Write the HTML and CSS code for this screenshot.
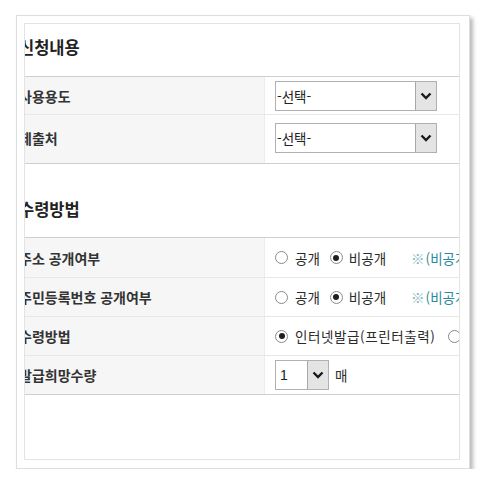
FILE: index.html
```html
<!DOCTYPE html>
<html lang="ko">
<head>
<meta charset="utf-8">
<title>신청내용</title>
<link rel="stylesheet" href="styles.css">
</head>
<body>
<div class="frame">
  <div class="viewport">
    <div class="content">
      <div class="section-title title-1">신청내용</div>
      <div class="table">
        <div class="row row-a">
          <div class="label">사용용도</div>
          <div class="value">
            <div class="select select-wide"><span class="sel-text">-선택-</span><span class="sel-btn"><svg width="12" height="8" viewBox="0 0 12 8"><path d="M1.5 1.5 L6 6 L10.5 1.5" fill="none" stroke="#1a1a1a" stroke-width="2.4"/></svg></span></div>
          </div>
        </div>
        <div class="row row-b last">
          <div class="label">제출처</div>
          <div class="value">
            <div class="select select-wide"><span class="sel-text">-선택-</span><span class="sel-btn"><svg width="12" height="8" viewBox="0 0 12 8"><path d="M1.5 1.5 L6 6 L10.5 1.5" fill="none" stroke="#1a1a1a" stroke-width="2.4"/></svg></span></div>
          </div>
        </div>
      </div>
      <div class="section-title title-2">수령방법</div>
      <div class="table">
        <div class="row row-c">
          <div class="label">주소 공개여부</div>
          <div class="value">
            <span class="radio"></span><span class="opt opt-first">공개</span>
            <span class="radio checked"></span><span class="opt">비공개</span>
            <span class="note"><span class="mark">※</span>(비공개 시 주소 일부가 표시되지 않습니다)</span>
          </div>
        </div>
        <div class="row row-d">
          <div class="label">주민등록번호 공개여부</div>
          <div class="value">
            <span class="radio"></span><span class="opt opt-first">공개</span>
            <span class="radio checked"></span><span class="opt">비공개</span>
            <span class="note"><span class="mark">※</span>(비공개 시 뒷자리가 표시되지 않습니다)</span>
          </div>
        </div>
        <div class="row row-d">
          <div class="label">수령방법</div>
          <div class="value">
            <span class="radio checked"></span><span class="opt opt-first opt-spaced">인터넷발급(프린터출력)</span>
            <span class="radio"></span><span class="opt">우편발송</span>
          </div>
        </div>
        <div class="row row-d last">
          <div class="label">발급희망수량</div>
          <div class="value">
            <div class="select select-qty"><span class="sel-text qty-text">1</span><span class="sel-btn"><svg width="12" height="8" viewBox="0 0 12 8"><path d="M1.5 1.5 L6 6 L10.5 1.5" fill="none" stroke="#1a1a1a" stroke-width="2.4"/></svg></span></div>
            <span class="unit">매</span>
          </div>
        </div>
      </div>
    </div>
  </div>
</div>
</body>
</html>
```
FILE: styles.css
```css
html, body {
  margin: 0;
  padding: 0;
  background: #ffffff;
}
body {
  font-family: "Noto Sans CJK KR", "Noto Sans", sans-serif;
  color: #333333;
}
.frame {
  margin: 15px 0 0 16px;
  width: 445px;
  height: 445px;
  border: 1px solid #dedede;
  background: #ffffff;
  box-shadow: 3px 3px 4px rgba(0, 0, 0, 0.28);
  padding: 7px 0 0 7px;
}
.viewport {
  width: 434px;
  height: 435px;
  border: 1px solid #e3e3e3;
  overflow: hidden;
  background: #ffffff;
}
.content {
  width: 700px;
  margin-left: -16px;
}
.section-title {
  font-size: 16.5px;
  font-weight: 700;
  line-height: 22px;
  color: #222222;
  padding-left: 10px;
  border-bottom: 1px solid #cfcfcf;
  box-sizing: border-box;
}
.title-1 {
  height: 53px;
  padding-top: 12px;
}
.title-2 {
  height: 74px;
  padding-top: 34px;
}
.table {
  border-bottom: 1px solid #cfcfcf;
}
.row {
  display: flex;
  border-bottom: 1px solid #e8e8e8;
}
.row.last {
  border-bottom: none;
}
.row-a { height: 37px; }
.row-b { height: 48px; }
.row-c { height: 39px; }
.row-d { height: 38px; }
.label {
  width: 256px;
  box-sizing: border-box;
  padding-left: 10px;
  background: #f6f6f6;
  border-right: 1px solid #ececec;
  font-size: 14px;
  font-weight: 700;
  color: #333333;
  display: flex;
  align-items: center;
  white-space: nowrap;
}
.row-b .label, .row-b .value {
  padding-bottom: 2px;
}
.value {
  flex: 1;
  display: flex;
  align-items: center;
  padding-left: 10px;
  font-size: 13.5px;
  white-space: nowrap;
  color: #2a2a2a;
}
.select {
  display: flex;
  height: 30px;
  box-sizing: border-box;
  border: 1px solid #b0b0b0;
  background: #ffffff;
}
.select-wide { width: 162px; }
.select-qty { width: 54px; }
.sel-text {
  flex: 1;
  padding-left: 1px;
  font-size: 13.5px;
  line-height: 28px;
  color: #222222;
}
.qty-text {
  padding-left: 4px;
  font-family: "Liberation Sans", Arial, sans-serif;
  font-size: 14px;
}
.sel-btn {
  width: 20px;
  border-left: 1px solid #a8a8a8;
  background: #e4e4e4;
  display: flex;
  align-items: center;
  justify-content: center;
}
.radio {
  width: 13px;
  height: 13px;
  box-sizing: border-box;
  border: 1px solid #8a8a8a;
  border-radius: 50%;
  background: #ffffff;
  margin-right: 6px;
  position: relative;
  flex: none;
}
.radio.checked::after {
  content: "";
  position: absolute;
  left: 2.5px;
  top: 2.5px;
  width: 6px;
  height: 6px;
  border-radius: 50%;
  background: #1e1e1e;
}
.opt {
  margin-right: 10px;
}
.opt-first {
  margin-left: 1px;
  margin-right: 10px;
}
.opt-spaced {
  letter-spacing: 0.6px;
  margin-right: 12px;
}
.note {
  margin-left: 15px;
  color: #2a8a9b;
}
.note .mark {
  color: #7fb6c0;
  margin-right: 1px;
}
.unit {
  margin-left: 6px;
}
```
